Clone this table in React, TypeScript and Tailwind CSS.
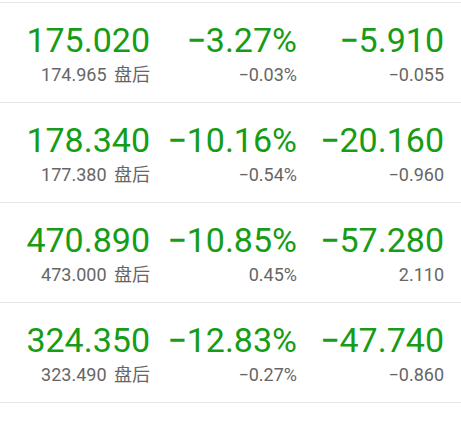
import React from "react";

type Row = {
  price: string;
  after: string;
  pct: string;
  pctSub: string;
  chg: string;
  chgSub: string;
};

const rows: Row[] = [
  { price: "175.020", after: "174.965", pct: "-3.27%", pctSub: "-0.03%", chg: "-5.910", chgSub: "-0.055" },
  { price: "178.340", after: "177.380", pct: "-10.16%", pctSub: "-0.54%", chg: "-20.160", chgSub: "-0.960" },
  { price: "470.890", after: "473.000", pct: "-10.85%", pctSub: "0.45%", chg: "-57.280", chgSub: "2.110" },
  { price: "324.350", after: "323.490", pct: "-12.83%", pctSub: "-0.27%", chg: "-47.740", chgSub: "-0.860" },
];

function Num({ v, big }: { v: string; big?: boolean }) {
  if (!v.startsWith("-")) return <>{v}</>;
  return (
    <>
      <span className={big ? "font-medium" : ""}>{"\u2212"}</span>
      {v.slice(1)}
    </>
  );
}

function Cell({ big, small }: { big: React.ReactNode; small: React.ReactNode }) {
  return (
    <div className="flex flex-col items-end">
      <div className="text-[34px] leading-[40px] text-[#169c16] whitespace-nowrap">{big}</div>
      <div className="mt-[3px] text-[18px] leading-[24px] text-[#666666] whitespace-nowrap">{small}</div>
    </div>
  );
}

export default function App() {
  return (
    <div
      className="w-[461px] h-[423px] bg-white overflow-hidden"
      style={{ fontFamily: 'Roboto, "Noto Sans CJK SC", sans-serif' }}
    >
      <div className="h-[2px]" />
      <div className="border-t border-[#e6e6e6]">
        {rows.map((r, i) => (
          <div
            key={i}
            className="h-[100px] border-b border-[#e6e6e6] grid grid-cols-3 pl-[3px] pr-[17px] pt-[17px]"
          >
            <Cell
              big={r.price}
              small={
                <>
                  {r.after}
                  <span className="ml-[3px]"> 盘后</span>
                </>
              }
            />
            <Cell big={<Num v={r.pct} big />} small={<Num v={r.pctSub} />} />
            <Cell big={<Num v={r.chg} big />} small={<Num v={r.chgSub} />} />
          </div>
        ))}
      </div>
    </div>
  );
}
